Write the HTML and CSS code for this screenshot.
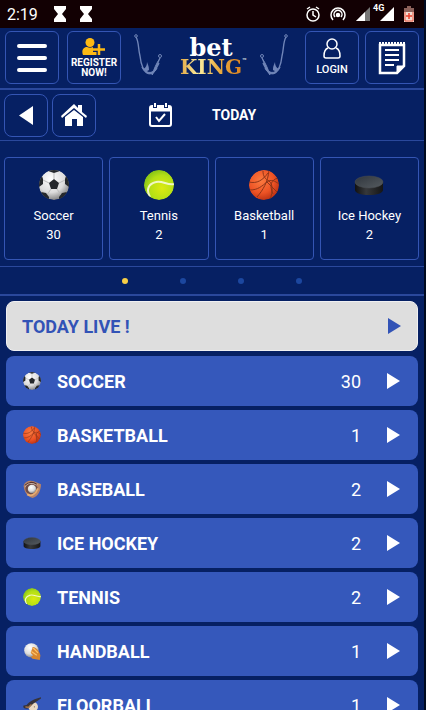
FILE: index.html
```html
<!DOCTYPE html>
<html lang="en">
<head>
    <meta charset="UTF-8">
    <meta name="viewport" content="width=device-width, initial-scale=1.0">
    <title>betKING - Today</title>
    <link rel="stylesheet" href="styles.css">
</head>
<body>
    <!-- shared sport icons and arrows -->
    <svg class="sprite" aria-hidden="true">
        <defs>
            <radialGradient id="white-ball" cx=".4" cy=".3" r=".75"><stop offset="0" stop-color="#fff"/><stop offset=".6" stop-color="#dcdcdc"/><stop offset="1" stop-color="#777"/></radialGradient>
            <radialGradient id="green-ball" cx=".6" cy=".6" r=".7"><stop offset="0" stop-color="#dcea10"/><stop offset=".6" stop-color="#b3df16"/><stop offset="1" stop-color="#77ba18"/></radialGradient>
            <radialGradient id="orange-ball" cx=".4" cy=".35" r=".7"><stop offset="0" stop-color="#fb7b40"/><stop offset=".6" stop-color="#ed5325"/><stop offset="1" stop-color="#b72f12"/></radialGradient>
            <linearGradient id="puck-top" x1="0" y1="0" x2="1" y2="1"><stop offset="0" stop-color="#30363d"/><stop offset="1" stop-color="#555b60"/></linearGradient>
            <linearGradient id="puck-side"><stop offset="0" stop-color="#111"/><stop offset=".4" stop-color="#36383b"/><stop offset="1" stop-color="#151515"/></linearGradient>
            <clipPath id="ball-clip"><circle cx="15" cy="15" r="15"/></clipPath>
        </defs>
        <symbol id="soccer" viewBox="0 0 30 30">
            <g clip-path="url(#ball-clip)">
                <circle cx="15" cy="15" r="15" fill="url(#white-ball)"/>
                <path d="M15 9V3M20 13l6-3M18 19l4 6M12 19l-4 6M10 13L4 10" stroke="#bbb" fill="none"/>
                <path d="M15 9l5 4-2 6h-6l-2-6zM9 1l6 2 6-2-2-2h-8zM26 9l0 5 4 3V9l-3-3zM20 27l3-4 5-1-3 6-5 3zM10 27l-3-4-5-1 3 6 5 3zM4 9l0 5-4 3V9l3-3z" fill="#25282c"/>
            </g>
        </symbol>
        <symbol id="tennis" viewBox="0 0 30 30">
            <g clip-path="url(#ball-clip)">
                <circle cx="15" cy="15" r="15" fill="url(#green-ball)"/>
                <path d="M6 27C2 20 4 14 12 12c6-2 12 4 18 2" fill="none" stroke="#f1f7c5" stroke-width="2"/>
            </g>
        </symbol>
        <symbol id="basketball" viewBox="0 0 30 30">
            <g clip-path="url(#ball-clip)">
                <circle cx="15" cy="15" r="15" fill="url(#orange-ball)"/>
                <path d="M8 27C14 20 19 12 20 0M0 12c8 2 14-2 19-9M1 20c8 0 12-4 17-8 4-3 8-1 12 2M14 1c0 5 2 8 6 10 4 3 4 10 1 19M29 8c-7 2-9 7-5 16M18 12l10 10" fill="none" stroke="#8d3519"/>
            </g>
        </symbol>
        <symbol id="puck" viewBox="0 0 30 30">
            <path d="M1 12v8c0 3 6 5 14 5s14-2 14-5v-8z" fill="url(#puck-side)"/>
            <ellipse cx="15" cy="12" rx="14" ry="6" fill="url(#puck-top)" stroke="#4a4e52" stroke-width=".5"/>
        </symbol>
        <symbol id="baseball" viewBox="0 0 30 30">
            <path d="M1 10C3 1 12 0 18 2l7 3 5 2c0 10-5 21-14 23C7 27 3 22 1 10z" fill="#b78368"/>
            <path d="M3 8C8 2 18 2 25 7L13 9 6 16z" fill="#e5d5c9"/>
            <path d="M4 14C4 6 15 4 22 9c5 4 2 14-6 15C8 24 4 20 4 14z" fill="#6f4b46"/>
            <path d="M3 9c6-7 15-6 20-2" fill="none" stroke="#5a3430" stroke-width="2"/>
            <circle cx="15" cy="15" r="7" fill="url(#white-ball)"/>
            <path d="M7 24c7 4 14 0 18-10" fill="none" stroke="#e7ad70" stroke-width="3"/>
        </symbol>
        <symbol id="handball" viewBox="0 0 30 30">
            <circle cx="14" cy="14" r="12" fill="url(#white-ball)"/>
            <path d="M15 8c5-1 12 6 14 14l-1 8-12-2c-3-2-3-5 1-5l-2-3c-5-2 1-6 1-12z" fill="#d8862e"/>
            <path d="M17 10l8 8M14 16l9 6" stroke="#ffc36b" stroke-width="2"/>
        </symbol>
        <symbol id="floorball" viewBox="0 0 30 30">
            <circle cx="17" cy="18" r="8" fill="#e9d9c4"/>
            <path d="M30 2C18 5 11 9 6 15l-5 1c-2 4 2 6 8 5l8-8 13-9z" fill="#37333a"/>
            <path d="M4 18l5 1 5-5" stroke="#b77d48" stroke-width="2" fill="none"/>
            <circle cx="19" cy="18" r="1" fill="#7a6250"/>
        </symbol>
        <symbol id="arrow" viewBox="0 0 13 16"><path d="M0 0l13 8-13 8z" fill="currentColor"/></symbol>
        <symbol id="hook" viewBox="0 0 28 42">
            <circle cx="2" cy="2" r="1.3" fill="none" stroke="currentColor"/>
            <path d="M2 3c3 5 2 11 4 19 1 9 3 15 8 17 6 1 8-4 11-10" fill="none" stroke="currentColor" stroke-width="1.4"/>
            <path d="M8 33c3 6 10 8 15 1-3 7-11 9-15-1z" fill="currentColor" stroke="currentColor"/>
            <path d="M9 35c3-1 4-4 4-7 1 3 2 4 2 8-2 2-4 1-6-1z" fill="currentColor"/>
            <path d="M26 24c-3 7-4 12-8 17 2-6 4-11 8-17z" fill="currentColor" stroke="currentColor"/>
            <circle cx="26" cy="22" r="1.5" fill="none" stroke="currentColor"/>
        </symbol>
    </svg>

    <div class="app">
        <div class="status">
            <span class="clock">2:19</span>
            <svg class="hourglass" viewBox="0 0 12 16"><path d="M0 0h12v3L8 8l4 5v3H0v-3l4-5-4-5z" fill="#fff"/></svg>
            <svg class="hourglass" viewBox="0 0 12 16"><path d="M0 0h12v3L8 8l4 5v3H0v-3l4-5-4-5z" fill="#fff"/></svg>
            <div class="status-right">
                <svg width="14" height="16" viewBox="0 0 14 16" fill="none" stroke="#fff" stroke-width="1.5"><circle cx="7" cy="9" r="6"/><path d="M7 5v4l3 2M1 3l3-2M13 3l-3-2"/></svg>
                <svg width="16" height="16" viewBox="0 0 16 16" fill="none" stroke="#fff" stroke-width="1.5"><path d="M3 14a7 7 0 1 1 10 0M5 11a4 4 0 1 1 6 0"/><circle cx="8" cy="9" r="1.5" fill="#fff"/></svg>
                <svg width="14" height="14" viewBox="0 0 14 14"><path d="M0 14L14 0v14z" fill="#777"/><path d="M0 14L9 5v9z" fill="#fff"/></svg>
                <span class="network"><span>4G</span><svg width="14" height="14" viewBox="0 0 14 14"><path d="M0 14L14 0v14z" fill="#fff"/></svg></span>
                <svg width="10" height="16" viewBox="0 0 10 16"><path d="M3 0h4v2h3v14H0V2h3z" fill="#f2dcd2"/><path d="M3 0h4v2h3v4H0V2h3z" fill="#8d615a"/><path d="M1 6v9h8V6" fill="none" stroke="#e9553f"/><path d="M5 7v6M2 10h6" stroke="#e9402f" stroke-width="1.5"/></svg>
            </div>
        </div>

        <header class="header">
            <button type="button" class="box" aria-label="Menu">
                <svg width="30" height="28" viewBox="0 0 30 28"><path d="M2 2h26M2 14h26M2 26h26" stroke="#fff" stroke-width="4" stroke-linecap="round"/></svg>
            </button>
            <button type="button" class="box register">
                <svg width="24" height="17" viewBox="0 0 24 17"><circle cx="8" cy="4.500" r="4.500" fill="#fdb913"/><path d="M1 17c-2-5 1-8 4-8 2 1 4 1 6 0 2 0 4 1 4 3v5z" fill="#fdb913"/><path d="M17 6v11M11 11.500h12" stroke="#062063" stroke-width="5"/><path d="M17 6v11M11 11.500h12" stroke="#fdb913" stroke-width="2.500"/></svg>
                <span>REGISTER<br>NOW!</span>
            </button>
            <a href="#" class="logo">
                <svg class="hook"><use href="#hook"/></svg>
                <span class="brand"><span class="bet">bet</span><span class="king">KING</span><span class="tm">™</span></span>
                <svg class="hook flip"><use href="#hook"/></svg>
            </a>
            <button type="button" class="box login">
                <svg width="18" height="21" viewBox="0 0 18 21" fill="none" stroke="#fff" stroke-width="1.500"><circle cx="9" cy="6" r="5"/><path d="M5 10c-3 1-4 4-4 8q0 2 2 2h12q2 0 2-2c0-4-1-7-4-8"/></svg>
                <span>LOGIN</span>
            </button>
            <button type="button" class="box" aria-label="Bet slip">
                <svg width="28" height="34" viewBox="0 0 28 34" fill="none" stroke="#fff"><path d="M2 4v28h17l7-7V4z" stroke-width="2.500"/><path d="M1 3h26" stroke-width="4" stroke-dasharray="2 1"/><path d="M7 9h14M7 14h14M7 19h14M7 24h9" stroke-width="2"/><path d="M19 32v-7h7z" fill="#fff"/></svg>
            </button>
        </header>

        <nav class="toolbar">
            <button type="button" class="box small" aria-label="Back">
                <svg width="14" height="19" viewBox="0 0 14 19"><path d="M14 0v19L0 9.500z" fill="#fff"/></svg>
            </button>
            <a href="#" class="box small" aria-label="Home">
                <svg width="26" height="22" viewBox="0 0 26 22" fill="#fff"><path d="M13 0l4 4V1h4v7l5 4-1 2L13 4 1 14l-1-2z"/><path d="M4 13l9-7 9 7v9h-6v-7h-5v7H4z"/></svg>
            </a>
            <svg class="calendar" viewBox="0 0 23 24" fill="none" stroke="#fff"><rect x="1" y="3" width="21" height="20" rx="2" stroke-width="2"/><path d="M1 6h21" stroke-width="5"/><path d="M6 0v5M17 0v5" stroke="#062063" stroke-width="4"/><path d="M6 0v4M17 0v4" stroke-width="2"/><path d="M7 14l3 4 6-7" stroke-width="2"/></svg>
            <h1>TODAY</h1>
        </nav>

        <section class="sports">
            <a href="#" class="sport"><svg><use href="#soccer"/></svg><span>Soccer</span><span>30</span></a>
            <a href="#" class="sport"><svg><use href="#tennis"/></svg><span>Tennis</span><span>2</span></a>
            <a href="#" class="sport"><svg><use href="#basketball"/></svg><span>Basketball</span><span>1</span></a>
            <a href="#" class="sport"><svg><use href="#puck"/></svg><span>Ice Hockey</span><span>2</span></a>
        </section>

        <div class="dots">
            <button type="button" class="dot active" aria-label="Page 1"></button>
            <button type="button" class="dot" aria-label="Page 2"></button>
            <button type="button" class="dot" aria-label="Page 3"></button>
            <button type="button" class="dot" aria-label="Page 4"></button>
        </div>

        <main class="list">
            <a href="#" class="row live"><span class="name">TODAY LIVE !</span><svg class="arrow"><use href="#arrow"/></svg></a>
            <a href="#" class="row"><svg class="icon"><use href="#soccer"/></svg><span class="name">SOCCER</span><span class="count">30</span><svg class="arrow"><use href="#arrow"/></svg></a>
            <a href="#" class="row"><svg class="icon"><use href="#basketball"/></svg><span class="name">BASKETBALL</span><span class="count">1</span><svg class="arrow"><use href="#arrow"/></svg></a>
            <a href="#" class="row"><svg class="icon"><use href="#baseball"/></svg><span class="name">BASEBALL</span><span class="count">2</span><svg class="arrow"><use href="#arrow"/></svg></a>
            <a href="#" class="row"><svg class="icon"><use href="#puck"/></svg><span class="name">ICE HOCKEY</span><span class="count">2</span><svg class="arrow"><use href="#arrow"/></svg></a>
            <a href="#" class="row"><svg class="icon"><use href="#tennis"/></svg><span class="name">TENNIS</span><span class="count">2</span><svg class="arrow"><use href="#arrow"/></svg></a>
            <a href="#" class="row"><svg class="icon"><use href="#handball"/></svg><span class="name">HANDBALL</span><span class="count">1</span><svg class="arrow"><use href="#arrow"/></svg></a>
            <a href="#" class="row"><svg class="icon"><use href="#floorball"/></svg><span class="name">FLOORBALL</span><span class="count">1</span><svg class="arrow"><use href="#arrow"/></svg></a>
        </main>
    </div>
</body>
</html>
```
FILE: styles.css
```css
* {
    box-sizing: border-box;
}
body {
    margin: 0;
    font-family: Roboto, sans-serif;
    color: #fff;
    background-color: #062063;
}
a {
    color: inherit;
    text-decoration: none;
}
button {
    font-family: inherit;
    color: inherit;
    padding: 0;
    cursor: pointer;
}
svg {
    display: block;
    flex: none;
}
.sprite {
    position: absolute;
    width: 0;
    height: 0;
}
.app {
    height: 100vh;
    overflow: hidden;
    border-right: 2px solid #000a20;
}

/* phone status bar */
.status {
    display: flex;
    align-items: center;
    height: 28px;
    padding: 0 10px 0 7px;
    background-color: #120003;
}
.clock {
    width: 47px;
    font-size: 16px;
}
.hourglass {
    width: 12px;
    height: 16px;
    margin-right: 14px;
}
.status-right {
    display: flex;
    align-items: center;
    gap: 10px;
    margin-left: auto;
}
.network {
    position: relative;
}
.network span {
    position: absolute;
    top: -3px;
    left: -7px;
    font-size: 9px;
    line-height: 9px;
    font-weight: bold;
}

/* top buttons */
.header {
    display: flex;
    gap: 6px;
    height: 62px;
    padding: 3px 5px;
    border-bottom: 2px solid #2a489c;
}
.box {
    display: flex;
    flex-direction: column;
    align-items: center;
    justify-content: center;
    width: 54px;
    height: 53px;
    border: 1px solid #3455b4;
    border-radius: 6px;
    background: none;
    font-size: 11px;
    line-height: 14px;
}
.register {
    margin-left: 2px;
    gap: 3px;
    font-size: 10px;
    line-height: 10px;
    font-weight: bold;
}
.login {
    gap: 4px;
    font-weight: 500;
}
.logo {
    display: flex;
    flex: 1;
    justify-content: space-between;
    padding: 3px 11px 0 7px;
}
.hook {
    width: 28px;
    height: 42px;
    color: #7085b8;
}
.flip {
    transform: scaleX(-1);
}
.brand {
    position: relative;
    display: flex;
    flex-direction: column;
    align-items: center;
    padding-top: 4px;
    font-family: "DejaVu Serif", serif;
    font-weight: bold;
}
.bet {
    font-size: 24px;
    line-height: 20px;
}
.king {
    font-size: 20px;
    line-height: 18px;
    color: transparent;
    background: linear-gradient(90deg, #e2a641, #fff0a0 30%, #e9b045 60%, #dc811d);
    -webkit-background-clip: text;
    background-clip: text;
}
.tm {
    position: absolute;
    top: 24px;
    left: 100%;
    font-size: 5px;
    line-height: 5px;
}

.toolbar {
    display: flex;
    align-items: center;
    gap: 4px;
    height: 51px;
    padding: 0 4px;
    border-bottom: 1px solid #2a489c;
}
.small {
    width: 44px;
    height: 43px;
    border-radius: 8px;
}
.calendar {
    width: 23px;
    height: 24px;
    margin-left: 49px;
}
.toolbar h1 {
    margin: 0 0 0 36px;
    font-size: 14px;
}

/* sport cards */
.sports {
    display: grid;
    grid-template-columns: repeat(4, 1fr);
    gap: 6px;
    padding: 16px 5px 6px 4px;
}
.sport {
    display: flex;
    flex-direction: column;
    align-items: center;
    height: 103px;
    padding-top: 12px;
    border: 1px solid #3455b4;
    border-radius: 4px;
    font-size: 13px;
    line-height: 19px;
}
.sport svg {
    width: 30px;
    height: 30px;
    margin-bottom: 6px;
}
.dots {
    display: flex;
    align-items: center;
    justify-content: center;
    gap: 52px;
    height: 30px;
    border-top: 1px solid #2a489c;
    border-bottom: 2px solid #2a489c;
}
.dot {
    width: 6px;
    height: 6px;
    border: none;
    border-radius: 50%;
    background-color: #1c479f;
}
.dot.active {
    background-color: #f7ce46;
}

.list {
    display: flex;
    flex-direction: column;
    gap: 4px;
    padding: 5px 6px;
}
.row {
    display: flex;
    flex: none;
    align-items: center;
    height: 50px;
    padding: 0 18px 0 17px;
    border-radius: 8px;
    background-color: #3558bb;
    font-size: 18px;
}
.live {
    margin-bottom: 1px;
    border: 1px solid #f0f0f2;
    background-color: #dedede;
    color: #3253b6;
    padding: 0 16px 0 15px;
}
.icon {
    width: 18px;
    height: 18px;
    margin-right: 16px;
}
.name {
    flex: 1;
    font-weight: bold;
}
.arrow {
    width: 13px;
    height: 16px;
    margin-left: 26px;
}
```
